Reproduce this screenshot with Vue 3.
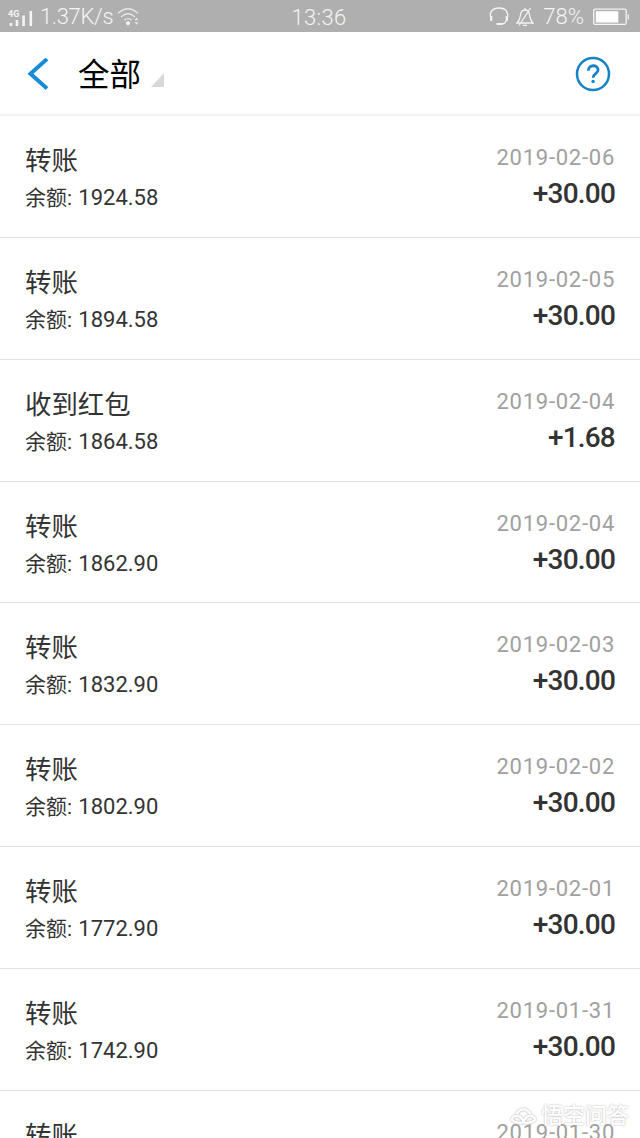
<template>
  <div class="page">
    <!-- 状态栏 -->
    <div class="status-bar">
      <div class="status-left">
        <svg class="signal" width="25" height="20" viewBox="0 0 25 20">
          <text x="0" y="7.500" class="net">4G</text>
          <path d="M3 14v3M9 11v6M15.600 6.500v10.500M22.800 2v15" />
        </svg>
        <span class="speed">1.37K/s</span>
        <svg class="wifi" width="24" height="20" viewBox="0 0 24 20">
          <path d="M1 6.500Q11 -3 21 6.500M4 10Q11 3.500 18 10M7.300 13.200Q11 10 14.700 13.200" />
          <circle cx="11" cy="16.300" r="2" />
          <path class="arrows" d="M17.500 13.200l2-2.600 2 2.600zM17.500 15.200l2 2.600 2-2.600z" />
        </svg>
      </div>
      <div class="status-time">13:36</div>
      <div class="status-right">
        <svg class="headset" width="20" height="20" viewBox="0 0 20 20">
          <path d="M2.500 13C-1 5 4 1 10 1s11 4 7.500 12M10 17h2.500q3.500 0 5-4" />
          <path class="thick" d="M2.200 9v5M17.800 9v5M7.500 17h5.500" />
        </svg>
        <svg class="bell" width="18" height="20" viewBox="0 0 18 20">
          <path d="M1 16h16q-3-3-3.500-8Q13 3 9 3T4.500 8Q4 13 1 16zM7 18.300h4M9 3V1M14.500 1L3 18.500" />
        </svg>
        <span class="percent">78%</span>
        <svg class="battery" width="37" height="18" viewBox="0 0 37 18">
          <rect x="0.700" y="1.200" width="32.500" height="15.200" rx="1.500" />
          <rect class="level" x="2.800" y="3.200" width="22.500" height="11.400" />
          <path d="M35.300 6.500v5" />
        </svg>
      </div>
    </div>

    <!-- 标题栏 -->
    <div class="nav-bar">
      <svg class="back" width="22" height="32" viewBox="0 0 22 32">
        <path d="M21 1L4.500 15.800L21 30.500" />
      </svg>
      <span class="nav-title">{{ title }}</span>
      <svg class="corner" width="13" height="14" viewBox="0 0 13 14">
        <path d="M13 0V14H0z" />
      </svg>
      <svg class="help" width="36" height="36" viewBox="0 0 36 36">
        <circle cx="18" cy="18" r="16" />
        <path class="mark" d="M13.300 14.700C13.300 8.200 23.100 8.200 23.100 14C23.100 17.400 18.100 17.300 18.100 21.800" />
        <circle class="dot" cx="18.100" cy="25.500" r="1.700" />
      </svg>
    </div>

    <!-- 账单列表 -->
    <div class="list">
      <div v-for="(item, index) in records" :key="index" class="record">
        <div class="record-left">
          <div class="record-name">{{ item.name }}</div>
          <div class="record-balance">余额: <span class="num">{{ item.balance }}</span></div>
        </div>
        <div class="record-right">
          <div class="record-date">{{ item.date }}</div>
          <div class="record-amount">{{ item.amount }}</div>
        </div>
      </div>
    </div>

    <!-- 水印 -->
    <div class="watermark">
      <svg width="27" height="18" viewBox="0 0 28 20">
        <path d="M6 8Q14 -3 22 8M13 14Q8 7 3 11T7 17T13 14M15 14Q20 7 25 11T21 17T15 14" />
      </svg>
      <span>悟空问答</span>
    </div>
  </div>
</template>

<script setup>
import { ref } from 'vue';

const title = ref('全部');

const records = ref([
  { name: '转账', balance: '1924.58', date: '2019-02-06', amount: '+30.00' },
  { name: '转账', balance: '1894.58', date: '2019-02-05', amount: '+30.00' },
  { name: '收到红包', balance: '1864.58', date: '2019-02-04', amount: '+1.68' },
  { name: '转账', balance: '1862.90', date: '2019-02-04', amount: '+30.00' },
  { name: '转账', balance: '1832.90', date: '2019-02-03', amount: '+30.00' },
  { name: '转账', balance: '1802.90', date: '2019-02-02', amount: '+30.00' },
  { name: '转账', balance: '1772.90', date: '2019-02-01', amount: '+30.00' },
  { name: '转账', balance: '1742.90', date: '2019-01-31', amount: '+30.00' },
  { name: '转账', balance: '1712.90', date: '2019-01-30', amount: '+30.00' }
]);
</script>

<style>
body {
  margin: 0;
  background-color: #fff;
}
</style>

<style scoped>
.page {
  position: relative;
  width: 640px;
  height: 1138px;
  overflow: hidden;
  background-color: #fff;
  font-family: Roboto, "Noto Sans CJK SC", sans-serif;
}

svg {
  flex: none;
  fill: none;
}

/* 状态栏 */
.status-bar {
  display: grid;
  grid-template-columns: 1fr auto 1fr;
  align-items: center;
  height: 32px;
  box-sizing: border-box;
  padding: 0 10px 0 8px;
  background-color: #afafaf;
  color: #f4f4f4;
  font-size: 22px;
  font-weight: 300;
  line-height: 32px;
}

.status-bar svg {
  stroke: #f4f4f4;
  stroke-width: 1.3;
}

.status-left,
.status-right {
  display: flex;
  align-items: center;
}

.status-right {
  justify-content: flex-end;
}

.status-bar .signal {
  margin-top: 4px;
  stroke-width: 2.6;
}

.net {
  fill: #f4f4f4;
  stroke: none;
  font-size: 9px;
  font-weight: 700;
}

.speed {
  margin-left: 7px;
  letter-spacing: -0.35px;
}

.wifi {
  margin-left: 4px;
}

.wifi path {
  opacity: 0.8;
}

.wifi circle,
.wifi .arrows {
  fill: #f4f4f4;
  stroke: none;
}

.status-time {
  padding-top: 2px;
  letter-spacing: 0.3px;
}

.bell {
  margin-left: 7px;
}

.status-bar .headset .thick {
  stroke-width: 2.2;
}

.percent {
  margin-left: 9px;
}

.battery {
  margin-left: 9px;
}

.battery .level {
  fill: #fff;
  stroke: none;
}

/* 标题栏 */
.nav-bar {
  display: flex;
  align-items: center;
  height: 84.2px;
  box-sizing: border-box;
  padding: 0 29px 0 26px;
  border-bottom: 2px solid #f3f3f3;
}

.back {
  margin-top: 2px;
  stroke: #168bd8;
  stroke-width: 4;
}

.nav-title {
  margin: 5px 0 0 30px;
  color: #000;
  font-size: 31.5px;
  line-height: 40px;
}

.corner {
  margin: 13px 0 0 10px;
  fill: #d8d8d8;
}

.help {
  margin: 2px 0 0 auto;
  stroke: #1683c8;
  stroke-width: 2.5;
}

.help .mark {
  stroke-width: 2.8;
}

.help .dot {
  fill: #1683c8;
  stroke: none;
}

/* 账单列表 */
.record {
  display: flex;
  justify-content: space-between;
  height: 121.8px;
  box-sizing: border-box;
  padding: 25px 25px 0;
  border-bottom: 1px solid #e2e2e2;
  color: #333;
}

.record-name {
  height: 40px;
  font-size: 26.4px;
  line-height: 40px;
}

.record-balance {
  padding-top: 1px;
  font-size: 21px;
  line-height: 32px;
}

.record-balance .num {
  margin-left: 1px;
  font-size: 22px;
}

.record-right {
  text-align: right;
}

.record-date {
  height: 34px;
  color: #a0a0a0;
  font-size: 22px;
  line-height: 34px;
  letter-spacing: 0.75px;
}

.record-amount {
  font-size: 28px;
  font-weight: 500;
  line-height: 38px;
  letter-spacing: -0.8px;
}

/* 水印 */
.watermark {
  position: absolute;
  right: 11px;
  bottom: 6px;
  display: flex;
  align-items: center;
  gap: 4px;
  color: #fff;
  font-size: 22px;
  font-weight: 500;
  line-height: 32px;
  text-shadow: 0 0 2px #aaa;
}

.watermark svg {
  stroke: #fff;
  stroke-width: 2.5;
  filter: drop-shadow(0 0 1px #aaa);
}
</style>
